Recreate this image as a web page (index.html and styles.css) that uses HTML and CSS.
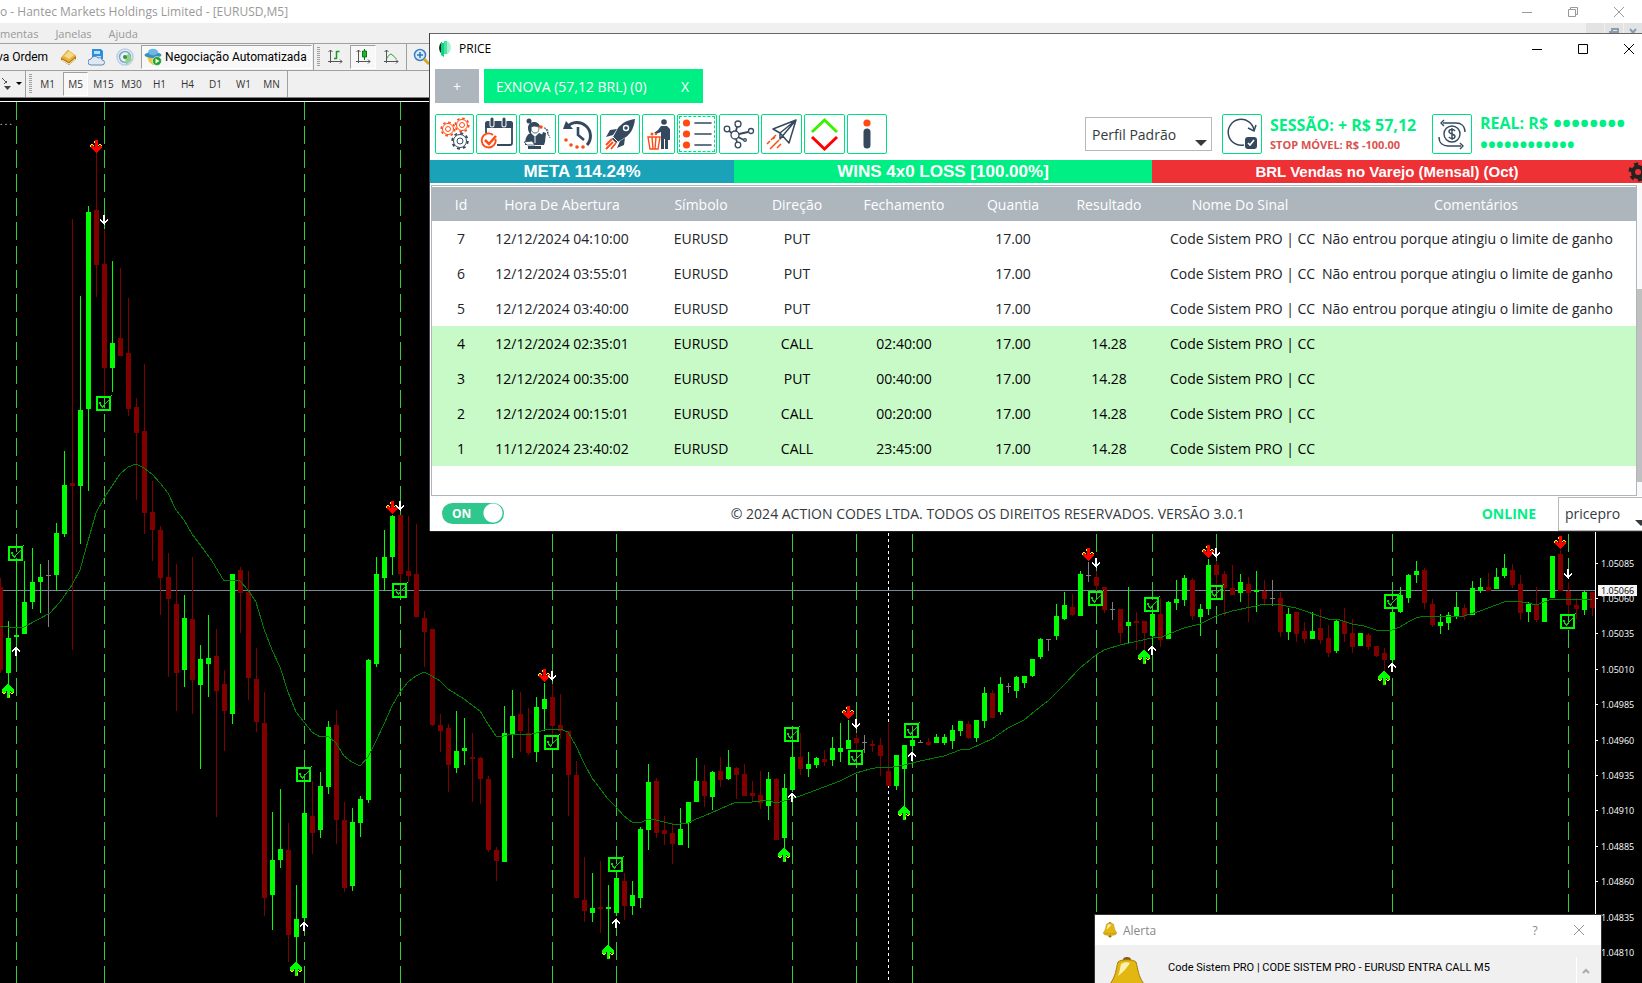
FILE: index.html
```html
<!DOCTYPE html>
<html lang="pt-BR">
<head>
  <meta charset="UTF-8">
  <meta name="viewport" content="width=device-width, initial-scale=1.0">
  <title>PRICE</title>
  <link rel="stylesheet" href="styles.css">
</head>
<body>
  <!-- Trading terminal -->
  <main class="terminal">
    <header class="terminal-title">
      <span>o - Hantec Markets Holdings Limited - [EURUSD,M5]</span>
      <div class="terminal-controls">
        <button aria-label="Minimizar"><svg width="12" height="12" viewBox="0 0 12 12"><path d="M1 6.5h10"/></svg></button>
        <button aria-label="Restaurar"><svg width="12" height="12" viewBox="0 0 12 12"><path d="M1.500 3.500h7v7h-7zM3.500 3.500v-2h7v7h-2"/></svg></button>
        <button aria-label="Fechar"><svg width="12" height="12" viewBox="0 0 12 12"><path d="M1 1l10 10M11 1L1 11"/></svg></button>
      </div>
    </header>
    <nav class="menu-bar">
      <a href="#ferramentas">mentas</a>
      <a href="#janelas">Janelas</a>
      <a href="#ajuda">Ajuda</a>
      <div class="mdi-controls">
        <button aria-label="Minimizar gráfico"></button>
        <button aria-label="Restaurar gráfico"><svg width="10" height="10" viewBox="0 0 10 10"><path d="M3 3V1h6v5H7M1 4h6v5H1z"/></svg></button>
        <button aria-label="Fechar gráfico"><svg width="10" height="10" viewBox="0 0 10 10"><path d="M2 1l6 7M8 1L2 8"/></svg></button>
      </div>
    </nav>
    <div class="toolbar">
      <button class="tool order">va Ordem</button>
      <button class="tool" aria-label="Histórico">
        <svg width="18" height="18" viewBox="0 0 18 18"><path d="M1 10l7-8 8 6v3l-7 6-8-5z" fill="#b07a1c"/><path d="M1 9.500l7-7.500 8 6-7 6z" fill="#e8b23a"/><path d="M4 8l5-5 5 4-5 4z" fill="#f8d98a"/><path d="M2 12l7 4 6-5" stroke="#fff3c8" fill="none"/></svg>
      </button>
      <button class="tool" aria-label="Nuvem">
        <svg width="18" height="18" viewBox="0 0 18 18"><path d="M4 1h9l2 2v8H4z" fill="#2b8fe0"/><path d="M6 3h6v3H6zM7 8h6v3H7z" fill="#bfe0fa"/><path d="M3 17a3 3 0 0 1 0-6 4 4 0 0 1 7-1 3 3 0 0 1 4 2 2.500 2.500 0 0 1 0 5z" fill="#dfe8f5" stroke="#6a86b0"/></svg>
      </button>
      <button class="tool" aria-label="Sinais">
        <svg width="18" height="18" viewBox="0 0 18 18" fill="none"><circle cx="9" cy="9" r="8" stroke="#b9cfe4" stroke-width="1.500"/><circle cx="9" cy="9" r="5.500" stroke="#79a6d2" stroke-width="1.500"/><path d="M9 9l1 8 6-5-3-7z" fill="#8fd08f"/><circle cx="9" cy="9" r="2" fill="#2d9a3c"/></svg>
      </button>
      <button class="tool auto pressed">
        <svg width="18" height="18" viewBox="0 0 18 18"><path d="M3 8l12 0-2 7-4 2-4-3z" fill="#f1c645"/><ellipse cx="9" cy="7" rx="8.500" ry="3" fill="#3b8fc4"/><ellipse cx="9" cy="4" rx="5" ry="3.200" fill="#6bb9e2"/><circle cx="13" cy="13" r="4.500" fill="#1fa32c" stroke="#fff" stroke-width=".6"/><path d="M11.500 10.500v5l4-2.500z" fill="#fff"/></svg>
        Negociação Automatizada
      </button>
      <span class="separator"></span>
      <span class="grip"></span>
      <button class="tool chart-kind" aria-label="Barras">
        <svg width="16" height="16" viewBox="0 0 16 16" fill="none" stroke="#555"><path d="M3.500 1v13M1 12.500h14M1.500 3l2-2 2 2M13 10.500l2 2-2 2"/><path d="M9.500 2v8M9.500 2.500h3M7 9.500h2.500" stroke="#159a1c" stroke-width="1.500"/></svg>
      </button>
      <button class="tool chart-kind pressed" aria-label="Velas">
        <svg width="16" height="16" viewBox="0 0 16 16" fill="none" stroke="#555"><path d="M3.500 1v13M1 12.500h14M1.500 3l2-2 2 2M13 10.500l2 2-2 2"/><path d="M9.500 0v11" stroke="#0b7a16"/><path d="M7.500 2h4v6h-4z" fill="#1fb52c" stroke="#0b7a16"/></svg>
      </button>
      <button class="tool chart-kind" aria-label="Linha">
        <svg width="16" height="16" viewBox="0 0 16 16" fill="none" stroke="#555"><path d="M3.500 1v13M1 12.500h14M1.500 3l2-2 2 2M13 10.500l2 2-2 2"/><path d="M3.500 10c2-4 4-6 6-4s3 3 4 4" stroke="#159a1c"/></svg>
      </button>
      <span class="separator"></span>
      <button class="tool" aria-label="Ampliar">
        <svg width="18" height="18" viewBox="0 0 18 18" fill="none"><circle cx="8" cy="7" r="5.500" fill="#d8ebfb" stroke="#3a7fc0" stroke-width="1.500"/><path d="M8 4v6M5 7h6" stroke="#2f75b8" stroke-width="1.500"/><path d="M12 11l5 5" stroke="#d9a727" stroke-width="3"/></svg>
      </button>
    </div>
    <div class="toolbar periods">
      <button class="tool shapes" aria-label="Setas">
        <svg width="22" height="16" viewBox="0 0 22 16"><path d="M0 2l5 5M2 8l3-3" stroke="#555" fill="none"/><path d="M2 10h7l-3.500 4z" fill="#444"/><path d="M14 6h6l-3 3z" fill="#000"/></svg>
      </button>
      <span class="separator"></span>
      <span class="grip"></span>
      <button class="tool period">M1</button>
      <button class="tool period pressed">M5</button>
      <button class="tool period">M15</button>
      <button class="tool period">M30</button>
      <button class="tool period">H1</button>
      <button class="tool period">H4</button>
      <button class="tool period">D1</button>
      <button class="tool period">W1</button>
      <button class="tool period">MN</button>
      <span class="separator"></span>
    </div>
    <section class="chart">
      <svg class="chart-canvas" role="img" aria-label="EURUSD M5">
        <defs>
          <symbol id="check" viewBox="0 0 16 16">
            <path d="M1 2h13v13H1z" fill="none" stroke="#00ff00" stroke-width="2"/>
            <path d="M3 7h2v2l1 2 1 0 2-3 2-2 2-2 2-2v1l-2 2-2 2-2 2-2 4H6L4 10z" fill="#00e000"/>
            <path d="M15 0h1v1h-1z" fill="#00ff00"/>
          </symbol>
          <symbol id="sell" viewBox="0 0 12 14">
            <path d="M5 0h3v7h1V6h1V5h2v3h-1v1h-1v1H9v1H8v1H7v1H6v-1H5v-1H4v-1H3V9H2V8H1V5h2v1h1v1h1z" fill="#ff0000"/>
            <path d="M4 1h1v2H4zM1 4h2v1H1zM0 5h1v2H0zM3 5h1v1H3zM9 4h2v1H9zM8 5h1v1H8zM11 5h1v1h-1z" fill="#ffff00"/>
          </symbol>
          <symbol id="buy" viewBox="0 0 12 14">
            <path d="M5 0h2v1h1v1h1v1h1v1h1v1h1v3h-1v1h-1V8H9V7H8v7H5V7H4v1H3v1H1V8H0V5h1V4h1V3h1V2h1V1h1z" fill="#00ff00"/>
            <path d="M1 9h2v1H1zM0 8h1v1H0zM3 8h1v1H3zM9 9h2v1H9zM8 8h1v1H8zM11 8h1v1h-1zM7 11h1v2H7z" fill="#ffff00"/>
          </symbol>
          <symbol id="down" viewBox="0 0 8 10">
            <path d="M3 0h2v6h1V5h1V4h1v2H7v1H6v1H5v2H4V9H3V8H2V7H1V6H0V4h1v1h1v1h1z" fill="#fff"/>
          </symbol>
          <symbol id="up" viewBox="0 0 8 10">
            <path d="M3 10h2V4h1v1h1v1h1V4H7V3H6V2H5V1H4V0v1H3v1H2v1H1v1H0v2h1V5h1V4h1z" fill="#fff"/>
          </symbol>
        </defs>
        <g id="plot" transform="translate(0 -102)"></g>
      </svg>
    </section>
  </main>

  <!-- Price window -->
  <section class="price-window">
    <header class="window-title">
      <svg width="14" height="16" viewBox="0 0 14 16"><path d="M4 1a6 7 0 0 0 0 12z" fill="#222"/><path d="M3 2h3v14l-3-2z" fill="#00d87a"/><path d="M6 0h3v13H6z" fill="#4be3a2"/><path d="M9 0a6 7 0 0 1 0 13z" fill="#a5f0d0"/></svg>
      <h1>PRICE</h1>
      <div class="window-controls">
        <button aria-label="Minimizar"><svg width="12" height="12" viewBox="0 0 12 12"><path d="M1 6.500h10"/></svg></button>
        <button aria-label="Maximizar"><svg width="12" height="12" viewBox="0 0 12 12"><path d="M1.500 1.500h9v9h-9z"/></svg></button>
        <button aria-label="Fechar"><svg width="12" height="12" viewBox="0 0 12 12"><path d="M1 1l10 10M11 1L1 11"/></svg></button>
      </div>
    </header>

    <div class="tabs">
      <button class="tab-add" aria-label="Nova conta">+</button>
      <div class="tab">
        <span>EXNOVA (57,12 BRL) (0)</span>
        <button aria-label="Fechar conta">X</button>
      </div>
    </div>

    <div class="actions">
      <div class="icon-row">
        <button class="icon-btn" aria-label="Configurações">
          <svg width="37" height="38" viewBox="0 0 37 38" fill="none">
            <g stroke="#ff4a12"><circle cx="12" cy="14" r="5.500"/><circle cx="12" cy="14" r="6.800" stroke-width="1.600" stroke-dasharray="2.600 2.740"/><circle cx="12" cy="14" r="2.500"/><circle cx="26" cy="10" r="5.500"/><circle cx="26" cy="10" r="6.800" stroke-width="1.600" stroke-dasharray="2.600 2.740"/><circle cx="26" cy="10" r="2.500"/></g>
            <g stroke="#34495e"><circle cx="24" cy="26" r="6.500"/><circle cx="24" cy="26" r="7.800" stroke-width="1.800" stroke-dasharray="3 3.120"/><circle cx="24" cy="26" r="3"/></g>
          </svg>
        </button>
        <button class="icon-btn" aria-label="Agenda">
          <svg width="39" height="38" viewBox="0 0 39 38" fill="none">
            <path d="M9 18V9a2 2 0 0 1 2-2h22a2 2 0 0 1 2 2v19a2 2 0 0 1-2 2H20" stroke="#34495e" stroke-width="1.800"/><path d="M8 13V9a3 3 0 0 1 3-3h22a3 3 0 0 1 3 3v4z" fill="#34495e"/>
            <path d="M15 4v6M27 4v6" stroke="#fff" stroke-width="5" stroke-linecap="round"/><path d="M15 4v6M27 4v6" stroke="#34495e" stroke-width="3" stroke-linecap="round"/>
            <path d="M16 20a7 7 0 1 0 2.500 4" stroke="#ff4a12" stroke-width="1.800"/><path d="M8 25l4 4 7-8" stroke="#ff4a12" stroke-width="2.500"/>
          </svg>
        </button>
        <button class="icon-btn" aria-label="Suporte">
          <svg width="35" height="38" viewBox="0 0 35 38">
            <circle cx="9" cy="6" r="2.500" fill="#34495e"/><path d="M8 13c0-4 3-6 6-6s6 2 6 5l-6-1-3 4v4c-2-1-3-3-3-6z" fill="#34495e"/><path d="M11 12l3-1 5 1c0 4-1 6-4 6s-4-3-4-6z" fill="#fff" stroke="#34495e" stroke-width=".8"/>
            <path d="M5 30c0-7 2-11 6-12l4 4 4-4c4 1 6 4 6 9l-1 3z" fill="#34495e"/><path d="M4 27l8-1 3 4H7z" fill="#fff" stroke="#34495e" stroke-width=".8"/><path d="M8 31h13v3H8z" fill="#34495e"/>
            <path d="M15 22v6" stroke="#fff"/><path d="M20 25l3-8 3 1-1 9z" fill="#34495e"/><path d="M24 13c4 0 5 4 3 7M26 14l4 9" stroke="#34495e" fill="none" stroke-dasharray="2 1"/><circle cx="21" cy="12" r="1.800" fill="#ff4a12"/>
          </svg>
        </button>
        <button class="icon-btn" aria-label="Histórico">
          <svg width="38" height="38" viewBox="0 0 38 38" fill="none">
            <path d="M8 12a13 13 0 1 1 20 18" stroke="#34495e" stroke-width="3"/><path d="M4 14l3-8 7 8z" fill="#34495e"/><path d="M19 12v8l6 5" stroke="#34495e" stroke-width="2.600"/>
            <g fill="#ff4a12"><circle cx="7" cy="25" r="1.800"/><circle cx="12" cy="30" r="1.800"/><circle cx="18" cy="32" r="1.800"/><circle cx="24" cy="32" r="1.800"/></g>
          </svg>
        </button>
        <button class="icon-btn" aria-label="Iniciar">
          <svg width="38" height="38" viewBox="0 0 38 38">
            <path d="M34 4c-8 1-13 4-17 9l-6 11 4 4 10-6c5-4 8-9 9-18z" fill="#34495e"/><circle cx="25" cy="13" r="3.200" fill="#fff"/><circle cx="25" cy="13" r="1.800" fill="#34495e"/>
            <path d="M16 14l-7 1-4 7 7-2zM24 23l-1 7-7 3 3-7z" fill="#34495e"/><path d="M12 22l5 5" stroke="#fff"/><path d="M11 24l-6 6M12 27l-7 7M15 28l-5 6" stroke="#ff4a12" stroke-width="1.800"/>
          </svg>
        </button>
        <button class="icon-btn" aria-label="Limpar">
          <svg width="31" height="38" viewBox="0 0 31 38">
            <circle cx="21" cy="7" r="2.800" fill="#34495e"/><path d="M18 11h6l3 3v11h-2v9h-3V24h-1v10h-3V17l-5 2-2-1 4-3z" fill="#34495e"/>
            <path d="M5 22h12l-2 12H7zM9 22l1 12M13 22l-1 12" fill="none" stroke="#ff4a12" stroke-width="1.400"/><circle cx="9" cy="19" r="1.500" fill="#ff4a12"/><path d="M12 18h2v2h-2z" fill="#ff4a12"/>
          </svg>
        </button>
        <button class="icon-btn selected" aria-label="Lista de operações">
          <svg width="38" height="38" viewBox="0 0 38 38">
            <g fill="#ff4a12"><circle cx="8.500" cy="8" r="3.600"/><circle cx="8.500" cy="19" r="3.600"/><circle cx="8.500" cy="30" r="3.600"/></g><path d="M17 8h16M17 19h16M17 30h16" stroke="#34495e" stroke-width="1.600" stroke-linecap="round"/>
          </svg>
        </button>
        <button class="icon-btn" aria-label="Conexões">
          <svg width="38" height="38" viewBox="0 0 38 38" fill="none" stroke="#34495e" stroke-width="1.300">
            <circle cx="15" cy="20" r="4"/><circle cx="18" cy="9" r="3"/><circle cx="7" cy="14" r="2.800"/><circle cx="31" cy="16" r="2.500"/><circle cx="18" cy="30" r="2.800"/><circle cx="25" cy="25" r="1.300"/>
            <path d="M16 16l1-4M9 16l3 2M19 19l9-2M16 24l1 3M18 22l6 3" stroke-width="1.800"/>
          </svg>
        </button>
        <button class="icon-btn" aria-label="Enviar">
          <svg width="39" height="38" viewBox="0 0 39 38" fill="none">
            <path d="M34 5L11 14l7 4zM34 5L18 18v6zM34 5l-7 23-9-10z" stroke="#34495e" stroke-width="1.500" stroke-linejoin="round"/><path d="M14 20l-5 5M8 26l-3 3M17 25l-9 9M19 29l-4 4M13 22l-2 2" stroke="#ff4a12" stroke-width="1.500"/>
          </svg>
        </button>
        <button class="icon-btn" aria-label="Compra e venda">
          <svg width="39" height="38" viewBox="0 0 39 38" fill="none" stroke-width="3"><path d="M7 17L19.500 5 32 17" stroke="#3df000"/><path d="M7 22l12.500 12L32 22" stroke="#ff0000"/></svg>
        </button>
        <button class="icon-btn" aria-label="Informações">
          <svg width="38" height="38" viewBox="0 0 38 38"><circle cx="19" cy="8" r="3.600" fill="#ff4a12"/><path d="M19 17v13" stroke="#34495e" stroke-width="7" stroke-linecap="round"/></svg>
        </button>
      </div>

      <div class="summary">
        <div class="select-box profile">
          <select aria-label="Perfil"><option>Perfil Padrão</option></select>
        </div>
        <button class="icon-btn" aria-label="Atualizar sessão">
          <svg width="38" height="38" viewBox="0 0 38 38" fill="none">
            <path d="M21 30A13 13 0 1 1 31 15" stroke="#34495e" stroke-width="1.500"/><path d="M25 13l6 3 2-6" stroke="#34495e" stroke-width="1.500"/><rect x="22" y="22" width="12" height="12" rx="3" fill="#34495e"/><path d="M25 28l2 2 4-5" stroke="#fff" stroke-width="1.600"/>
          </svg>
        </button>
        <div class="session">
          <strong>SESSÃO: + R$ 57,12</strong>
          <small>STOP MÓVEL: R$ -100.00</small>
        </div>
        <button class="icon-btn" aria-label="Mostrar saldo">
          <svg width="38" height="38" viewBox="0 0 38 38" fill="none" stroke="#34495e" stroke-width="1.400">
            <circle cx="19" cy="19" r="8"/><path d="M22 16c-1-2-6-2-6 .5 0 3 6 2 6 5 0 2.500-5 2.500-6 .5M19 13v12"/><path d="M10 8h13c5 0 9 3 9 9M11 5L8 8l3 3M28 31H15c-5 0-9-3-9-9M27 28l3 3-3 3"/>
          </svg>
        </button>
        <div class="balance">
          <p>REAL: R$ <span class="dots">••••••••</span></p>
          <p class="dots small">••••••••••••</p>
        </div>
      </div>
    </div>

    <div class="status-bar">
      <div class="meta">META 114.24%</div>
      <div class="wins">WINS 4x0 LOSS [100.00%]</div>
      <div class="news">
        <span>BRL Vendas no Varejo (Mensal) (Oct)</span>
        <button aria-label="Configurar notícias">
          <svg width="20" height="20" viewBox="0 0 20 20" fill="none" stroke="#222"><circle cx="10" cy="10" r="5" stroke-width="4"/><circle cx="10" cy="10" r="8" stroke-width="3" stroke-dasharray="4.190 4.190"/></svg>
        </button>
      </div>
    </div>

    <!-- Operations -->
    <div class="operations">
      <div class="table-box">
        <table>
          <colgroup>
            <col class="col-id"><col class="col-time"><col class="col-symbol"><col class="col-side"><col class="col-close"><col class="col-amount"><col class="col-result"><col class="col-signal"><col>
          </colgroup>
          <thead>
            <tr><th>Id</th><th>Hora De Abertura</th><th>Símbolo</th><th>Direção</th><th>Fechamento</th><th>Quantia</th><th>Resultado</th><th>Nome Do Sinal</th><th>Comentários</th></tr>
          </thead>
          <tbody>
            <tr><td>7</td><td>12/12/2024 04:10:00</td><td>EURUSD</td><td>PUT</td><td></td><td>17.00</td><td></td><td>Code Sistem PRO | CC</td><td>Não entrou porque atingiu o limite de ganho</td></tr>
            <tr><td>6</td><td>12/12/2024 03:55:01</td><td>EURUSD</td><td>PUT</td><td></td><td>17.00</td><td></td><td>Code Sistem PRO | CC</td><td>Não entrou porque atingiu o limite de ganho</td></tr>
            <tr><td>5</td><td>12/12/2024 03:40:00</td><td>EURUSD</td><td>PUT</td><td></td><td>17.00</td><td></td><td>Code Sistem PRO | CC</td><td>Não entrou porque atingiu o limite de ganho</td></tr>
            <tr class="win"><td>4</td><td>12/12/2024 02:35:01</td><td>EURUSD</td><td>CALL</td><td>02:40:00</td><td>17.00</td><td>14.28</td><td>Code Sistem PRO | CC</td><td></td></tr>
            <tr class="win"><td>3</td><td>12/12/2024 00:35:00</td><td>EURUSD</td><td>PUT</td><td>00:40:00</td><td>17.00</td><td>14.28</td><td>Code Sistem PRO | CC</td><td></td></tr>
            <tr class="win"><td>2</td><td>12/12/2024 00:15:01</td><td>EURUSD</td><td>CALL</td><td>00:20:00</td><td>17.00</td><td>14.28</td><td>Code Sistem PRO | CC</td><td></td></tr>
            <tr class="win"><td>1</td><td>11/12/2024 23:40:02</td><td>EURUSD</td><td>CALL</td><td>23:45:00</td><td>17.00</td><td>14.28</td><td>Code Sistem PRO | CC</td><td></td></tr>
          </tbody>
        </table>
      </div>
      <div class="scrollbar"><div class="thumb"></div></div>
    </div>

    <footer class="window-footer">
      <label class="toggle"><input type="checkbox" checked><span>ON</span></label>
      <p class="copyright">© 2024 ACTION CODES LTDA. TODOS OS DIREITOS RESERVADOS. VERSÃO 3.0.1</p>
      <strong class="online">ONLINE</strong>
      <div class="select-box user">
        <select aria-label="Usuário"><option>pricepro</option></select>
      </div>
    </footer>
  </section>

  <!-- Alert window -->
  <section class="alert">
    <header class="alert-title">
      <svg width="14" height="16" viewBox="0 0 36 40"><use href="#bell"/></svg>
      <h2>Alerta</h2>
      <button aria-label="Ajuda">?</button>
      <button aria-label="Fechar"><svg width="12" height="12" viewBox="0 0 12 12"><path d="M1 1l10 10M11 1L1 11"/></svg></button>
    </header>
    <div class="alert-body">
      <svg width="36" height="40" viewBox="0 0 36 40">
        <g id="bell">
          <circle cx="18" cy="36" r="3.500" fill="#9a6a00"/><path d="M14 3a4 3 0 0 1 8 0z" fill="#8a5a10"/>
          <path d="M9 5c3-3 15-3 18 0 2 7 2 14 8 22 1 4-4 7-17 7S0 31 1 27C7 19 7 12 9 5z" fill="#e2b712" stroke="#a87a08"/><path d="M12 7c3-2 7-2 9-1-3 5-7 9-12 13 2-5 2-8 3-12z" fill="#fbf0b0"/><path d="M2 27c8 4 24 4 32 0" stroke="#a87a08" fill="none"/>
        </g>
      </svg>
      <p>Code Sistem PRO | CODE SISTEM PRO - EURUSD ENTRA CALL M5</p>
      <button class="scroll-up" aria-label="Rolar para cima"><svg width="8" height="6" viewBox="0 0 8 6"><path d="M1 5l3-3 3 3"/></svg></button>
    </div>
  </section>

  <script src="chart.js"></script>
</body>
</html>
```
FILE: styles.css
```css
/* General Styles */
* {
  box-sizing: border-box;
}
body {
  margin: 0;
  height: 100vh;
  overflow: hidden;
  position: relative;
  background: #000;
  color: #212529;
  font-family: "Open Sans", "Noto Sans", sans-serif;
  font-size: 14px;
}
button, select, input {
  font: inherit;
  color: inherit;
  margin: 0;
  padding: 0;
  border: 0;
  border-radius: 0;
  background: none;
}
button {
  display: flex;
  align-items: center;
  justify-content: center;
}
svg {
  display: block;
  flex: none;
}
h1, h2, p {
  margin: 0;
  font-weight: normal;
}
/* Terminal Styles */
.terminal {
  height: 100%;
  display: flex;
  flex-direction: column;
  background: #f0f0f0;
  font-size: 12px;
  color: #000;
}
.terminal-title {
  height: 23px;
  flex: none;
  display: flex;
  align-items: center;
  justify-content: space-between;
  background: #fff;
  color: #999;
}
.terminal-controls {
  display: flex;
}
.terminal-controls button {
  width: 46px;
  height: 20px;
}
.terminal-controls path,
.alert path[d^="M1 1"] {
  fill: none;
  stroke: #999;
}
.menu-bar {
  height: 21px;
  flex: none;
  display: flex;
  align-items: center;
  gap: 17px;
  border-bottom: 1px solid #a0a0a0;
  font-size: 11px;
}
.menu-bar a {
  color: #999;
  text-decoration: none;
}
.mdi-controls {
  align-self: stretch;
  margin-left: auto;
  display: flex;
  gap: 1px;
}
.mdi-controls button {
  width: 18px;
  background: #e3e3e3;
}
.mdi-controls path {
  fill: none;
  stroke: #8a9db0;
  stroke-width: 2;
}
.toolbar {
  height: 27px;
  flex: none;
  display: flex;
  align-items: center;
  border-bottom: 1px solid #a0a0a0;
  font-family: Roboto, sans-serif;
}
.tool {
  height: 24px;
  min-width: 28px;
}
.order {
  padding: 0 7px 0 0;
  margin-left: -3px;
}
.auto {
  gap: 3px;
  padding: 0 4px 0 2px;
  margin: 0 1px 0 2px;
}
.chart-kind {
  width: 26px;
  min-width: 26px;
  margin-right: 2px;
}
.pressed {
  background: #f8f8f8;
  border: 1px solid #fff;
  border-top-color: #a0a0a0;
  border-left-color: #a0a0a0;
}
.separator {
  width: 1px;
  height: 100%;
  background: #a0a0a0;
}
.grip {
  width: 3px;
  height: 20px;
  margin: 0 2px 0 3px;
  background: repeating-linear-gradient(#a0a0a0 0 1px, #f0f0f0 1px 2px);
}
.periods {
  color: #333;
  font-family: "Open Sans", "Noto Sans", sans-serif;
  font-size: 10px;
  border-bottom: 1px solid #808080;
}
.period {
  width: 25px;
  min-width: 25px;
  margin-right: 3px;
}
.shapes {
  width: 25px;
  min-width: 25px;
}
.periods .grip {
  margin: 0 3px;
}
.chart {
  flex: 1;
  min-height: 0;
  background: #000;
  border-top: 3px solid #000;
  box-shadow: inset 0 1px #fff;
  padding-top: 1px;
}
.chart-canvas {
  width: 100%;
  height: 100%;
  shape-rendering: crispEdges;
}
.bull {
  fill: #00ff00;
}
.bear {
  fill: #800000;
}
.flat {
  fill: #808080;
}
.average {
  fill: none;
  stroke: #008000;
}
.signal-line {
  stroke: #32cd32;
  stroke-dasharray: 18 6;
}
.day-line {
  stroke: #fff;
  stroke-dasharray: 3 3;
}
.price-line {
  stroke: #778899;
}
.axis {
  stroke: #fff;
}
.axis-label {
  fill: #fff;
  font-size: 9px;
}
.price-tag {
  fill: #f5f5f5;
}
.price-text {
  fill: #000;
  font-size: 9px;
}
/* Price Window Styles */
.price-window {
  position: absolute;
  top: 33px;
  left: 430px;
  right: -10px;
  background: #fff;
  border-top: 1px solid #666;
  box-shadow: 0 1px #222, -1px 0 #444;
}
.window-title {
  height: 29px;
  display: flex;
  align-items: center;
  gap: 7px;
  padding-left: 8px;
  color: #000;
}
.window-title h1 {
  font-size: 12px;
}
.window-controls {
  margin-left: auto;
  display: flex;
}
.window-controls button {
  width: 46px;
  height: 28px;
}
.window-controls path {
  fill: none;
  stroke: #000;
}
.tabs {
  display: flex;
  gap: 5px;
  padding: 6px 5px 11px;
  color: #fff;
}
.tab-add {
  width: 44px;
  background: #adb5bd;
}
.tab {
  height: 34px;
  display: flex;
  align-items: center;
  justify-content: space-between;
  width: 219px;
  padding: 0 14px 0 12px;
  background: #00ef85;
}
.actions {
  display: flex;
  justify-content: space-between;
  padding: 0 0 6px 5px;
}
.icon-row {
  display: flex;
  gap: 2px;
}
.icon-btn {
  height: 40px;
  border: 1px solid #00e083;
  border-radius: 2px;
}
.icon-btn.selected {
  outline: 1px dashed #00e083;
  outline-offset: -3px;
}
.summary {
  display: flex;
  align-items: center;
  gap: 8px;
}
.select-box {
  position: relative;
  height: 34px;
}
.select-box select {
  appearance: none;
  width: 100%;
  height: 100%;
  padding: 0 8px 0 6px;
  border: 1px solid #b8b8b8;
  background: #fff;
  color: #343a40;
}
.select-box::after {
  content: "";
  position: absolute;
  right: 5px;
  bottom: 5px;
  border: 6px solid transparent;
  border-top-color: #343a40;
  border-bottom: 0;
}
.profile {
  width: 127px;
  margin-right: 2px;
}
.session {
  width: 154px;
  display: flex;
  flex-direction: column;
  white-space: nowrap;
}
.session strong {
  font-size: 16px;
  line-height: 22px;
  color: #00ef85;
}
.session small {
  font-size: 11px;
  line-height: 18px;
  font-weight: bold;
  color: #d9534f;
}
.balance {
  width: 172px;
  height: 40px;
  display: flex;
  flex-direction: column;
  justify-content: space-between;
  white-space: nowrap;
  font-size: 16px;
  color: #00ef85;
}
.balance p {
  height: 18px;
  line-height: 18px;
  display: flex;
  align-items: center;
  gap: 5px;
  font-weight: bold;
}
.balance .dots {
  font-size: 24px;
}
.balance .small {
  font-size: 21px;
}
.status-bar {
  display: grid;
  grid-template-columns: 304fr 418fr 500fr;
  font: bold 17px/23px "Liberation Sans", sans-serif;
  color: #fff;
  text-align: center;
}
.meta {
  background: #19a2b8;
}
.wins {
  background: #00ef85;
}
.news {
  display: flex;
  background: #ee3135;
  font-size: 15px;
}
.news span {
  flex: 1;
}
.news button {
  width: 30px;
  justify-content: flex-start;
  padding-left: 6px;
}
/* Operations Table Styles */
.operations {
  display: flex;
  padding: 2px 0 0 1px;
}
.table-box {
  flex: 1;
  min-height: 311px;
  padding: 1px 0;
  border: 1px solid #adb5bd;
}
table {
  width: 100%;
  table-layout: fixed;
  border-collapse: collapse;
}
th, td {
  height: 35px;
  padding: 0;
  text-align: center;
  white-space: nowrap;
}
th {
  height: 34px;
  background: #adb5bd;
  color: #fff;
  font-weight: normal;
}
th:first-child, td:first-child {
  padding-left: 10px;
}
td:nth-child(n+8) {
  padding-left: 6px;
  text-align: left;
}
.win {
  background: #c8fac8;
  color: #000;
}
.col-id {
  width: 48px;
}
.col-time {
  width: 164px;
}
.col-symbol {
  width: 114px;
}
.col-side {
  width: 78px;
}
.col-close {
  width: 136px;
}
.col-amount {
  width: 82px;
}
.col-result {
  width: 110px;
}
.col-signal {
  width: 152px;
}
.scrollbar {
  width: 15px;
  padding: 104px 0 14px;
  display: flex;
  background: #f8f9fa;
}
.thumb {
  flex: 1;
  background: #c0c0c0;
}
.window-footer {
  height: 35px;
  display: flex;
  align-items: center;
  padding-left: 12px;
  gap: 22px;
}
.toggle {
  display: grid;
  align-items: center;
  width: 62px;
  height: 21px;
  color: #fff;
  font-size: 12px;
  font-weight: bold;
}
.toggle input, .toggle span {
  grid-area: 1 / 1;
}
.toggle span {
  padding-left: 10px;
}
.toggle input {
  appearance: none;
  width: 62px;
  height: 21px;
  border-radius: 11px;
  background: radial-gradient(circle at 51px 10px, #fff 9px, #2fc78d 10px);
}
.copyright {
  flex: 1;
  padding-right: 10px;
  text-align: center;
  color: #343a40;
}
.online {
  color: #00ef85;
}
.user {
  width: 94px;
}
/* Alert Styles */
.alert {
  position: absolute;
  left: 1094px;
  bottom: 0;
  width: 508px;
  height: 69px;
  overflow: hidden;
  background: #f0f0f0;
  border: 1px solid #333;
  border-bottom: 0;
}
.alert-title {
  height: 30px;
  display: flex;
  align-items: center;
  gap: 6px;
  padding-left: 8px;
  background: #fff;
  color: #888;
  font-size: 12px;
}
.alert-title h2 {
  flex: 1;
  font-size: 12px;
}
.alert-title button {
  width: 38px;
}
.alert-title button:last-child {
  margin-right: 3px;
}
.alert-body {
  display: flex;
  align-items: flex-start;
  padding: 12px 0 0 14px;
  gap: 23px;
  color: #000;
  font-family: Roboto, sans-serif;
  font-size: 11px;
  line-height: 22px;
}
.alert-body p {
  flex: 1;
}
.scroll-up {
  width: 25px;
  height: 28px;
  padding-right: 6px;
  border-left: 1px solid #fff;
}
.scroll-up path {
  fill: none;
  stroke: #aaa;
  stroke-width: 2;
}
```
FILE: chart.js
```js
const STEP = 8;

// one candle per entry: colour, high, body top, body bottom, low
const candles = `
r578,587,670,673 g621,638,673,687 g561,635,637,647 g561,602,634,634 g548,582,602,609 g564,577,582,613 d560,575,576,627 g523,533,575,591
g451,485,534,537 r219,483,486,650 g296,410,486,544 g206,212,409,491 r153,210,265,297 r229,264,368,396 g261,343,368,392 r268,338,356,356
r298,353,409,416 r398,407,433,500 r364,431,513,534 r481,512,530,561 r526,530,578,615 r553,577,599,677 r564,604,673,711 g595,618,670,687
r557,619,680,714 g645,659,685,769 g615,658,664,697 r629,656,691,817 r670,684,711,751 g574,574,714,724 r567,570,593,633 r571,592,678,700
r648,679,722,732 r692,723,898,916 g812,860,895,930 g789,849,860,868 r823,850,935,962 g885,919,937,963 g782,813,918,921 r781,816,833,854
g772,786,830,838 g721,727,787,794 r710,725,820,844 r802,820,888,892 g808,822,886,891 g796,799,823,837 g659,660,800,803 g557,574,664,667
g530,557,578,591 g515,516,557,575 r515,515,574,583 r516,571,576,582 r524,574,617,617 r611,618,632,667 r629,629,725,726 r714,725,731,752
r724,728,765,792 g711,751,768,773 g718,748,751,765 r733,757,759,802 r757,758,779,804 r776,779,850,852 r847,850,861,881 g706,733,862,862
g690,716,734,758 r692,714,731,752 r708,733,753,755 g697,707,752,762 g683,699,709,731 r684,697,726,735 r694,725,731,739 r731,731,775,816
r761,775,898,898 r857,900,911,922 g873,908,913,922 r861,907,909,933 g885,907,909,947 g872,878,913,916 r873,881,906,920 g881,895,906,915
g827,829,898,908 g764,782,830,850 r778,781,833,838 r816,830,834,845 r823,833,844,864 g808,829,845,845 g802,802,823,848 g758,781,802,802
r765,781,796,807 g771,772,797,810 r757,771,780,787 g750,767,779,780 r767,768,775,799 r764,774,796,796 r781,793,796,801 r771,795,803,809
g772,779,806,820 r778,779,840,840 g774,788,838,849 g742,757,790,790 r733,757,769,775 g752,764,769,777 g757,758,765,768 r750,759,762,766
g737,748,760,766 g723,748,752,762 g720,740,749,749 r733,738,743,750 d735,742,743,753 r740,744,746,752 r738,745,756,776 r723,771,786,786
g755,755,786,790 g745,745,769,806 g738,740,746,750 d740,742,743,743 r738,742,745,746 g734,737,743,743 g734,737,743,745 g725,730,741,749
g721,721,731,736 r721,724,738,739 g720,720,738,742 g687,693,721,728 r690,693,718,718 g677,684,712,715 d683,686,687,693 g676,677,691,698
g676,676,683,688 g659,659,676,677 g638,639,657,659 d639,639,640,651 g604,616,636,640 g592,605,619,620 r594,607,615,616 g571,574,616,616
d562,575,576,582 r571,577,586,591 r587,587,610,613 d602,609,610,620 r609,609,633,643 g587,622,626,644 r612,621,623,650 r621,621,633,651
g612,614,636,645 r598,614,640,647 g601,602,639,639 g580,599,603,610 g575,578,600,606 r578,580,616,620 g604,609,617,636 g559,565,609,615
r561,565,575,585 r571,574,588,616 r565,588,595,595 g574,582,593,602 r577,584,593,622 g571,590,592,612 r580,591,599,606 d580,598,599,606
r592,598,632,637 g608,614,632,640 r612,612,634,642 r622,631,639,643 g612,631,639,639 r609,628,640,644 r625,638,653,657 g620,621,651,653
r608,621,634,642 r619,633,647,653 g633,633,646,646 r633,635,647,650 r646,646,656,657 r648,653,660,671 g609,612,660,664 g587,595,612,613
g574,575,598,603 g561,571,575,583 r568,570,603,609 r599,604,625,627 g614,622,626,634 g612,615,623,630 g592,607,616,619 r604,608,616,620
g581,588,615,615 g578,587,591,593 r573,587,591,591 g568,577,589,589 g554,568,576,578 r564,570,585,588 r575,584,613,620 g602,604,612,622
r587,605,620,622 g598,598,622,622 g556,556,598,598 r550,554,591,591 r582,591,605,614 r598,605,609,619 g591,592,610,615 r592,592,608,616
`.trim().split(/\s+/);

const average = "0,626 16,628 24,627 50,613 60,602 72,585 80,570 86,548 96,513 104,498 120,474 128,467 136,464 144,468 152,474 160,483 168,493 176,510 184,520 192,534 204,550 212,561 224,581 232,580 240,581 248,590 256,602 264,629 272,650 280,667 288,692 296,712 304,722 312,732 320,737 328,736 336,743 344,756 352,762 360,766 368,757 376,741 384,724 392,706 400,692 408,682 416,676 424,672 432,676 440,681 448,689 464,699 480,711 488,724 496,736 504,736 512,734 528,735 536,733 544,730 552,729 560,729 568,732 576,746 584,763 592,778 608,799 616,807 624,816 632,822 640,823 648,819 656,820 672,824 680,824 688,823 696,819 704,816 720,809 736,802 752,802 768,800 776,803 784,801 800,796 816,790 840,781 856,773 870,769 880,767 888,768 904,765 920,761 944,756 960,750 970,749 992,739 1008,728 1024,720 1040,707 1048,701 1064,685 1080,668 1096,655 1104,650 1120,645 1152,638 1162,637 1176,631 1184,628 1200,624 1208,620 1216,616 1232,611 1256,606 1264,604 1276,604 1296,608 1328,619 1340,620 1352,624 1364,626 1376,630 1384,631 1392,630 1400,627 1408,622 1416,618 1424,616 1448,617 1464,616 1480,611 1496,605 1504,602 1516,601 1528,603 1536,605 1544,602 1552,599 1592,599";

// x of the candle, y of the top of the mark
const marks = {
  check: [[16, 546], [104, 396], [304, 767], [400, 583], [552, 735], [616, 857], [792, 727], [856, 750], [912, 723], [1096, 591], [1152, 597], [1216, 585], [1392, 594], [1568, 614]],
  sell: [[96, 140], [392, 501], [544, 669], [848, 706], [1088, 548], [1208, 545], [1560, 536]],
  buy: [[8, 684], [296, 962], [608, 945], [784, 848], [904, 806], [1144, 650], [1384, 671]],
  down: [[104, 215], [400, 501], [552, 671], [856, 719], [1096, 558], [1216, 548], [1568, 569]],
  up: [[16, 646], [304, 921], [616, 918], [792, 792], [912, 751], [1152, 645], [1392, 662]]
};
const markSize = { check: [16, 16], sell: [12, 14], buy: [12, 14], down: [8, 10], up: [8, 10] };

const prices = [["1.05085", 563], ["1.05060", 598], ["1.05035", 633], ["1.05010", 669], ["1.04985", 704], ["1.04960", 740], ["1.04935", 775], ["1.04910", 810], ["1.04885", 846], ["1.04860", 881], ["1.04835", 917], ["1.04810", 952]];

const colours = { g: "bull", r: "bear", d: "flat" };
let out = "";

function line(name, x1, y1, x2, y2) {
  out += `<line class="${name}" x1="${x1}" y1="${y1}" x2="${x2}" y2="${y2}"/>`;
}

line("price-line", 0, 590.5, 1595, 590.5);
marks.check.forEach(([x]) => line("signal-line", x + 0.5, 102, x + 0.5, 1200));
line("day-line", 888.5, 533, 888.5, 1200);

candles.forEach((entry, i) => {
  const [high, top, bottom, low] = entry.slice(1).split(",").map(Number);
  const x = i * STEP;
  const name = colours[entry[0]];
  out += `<rect class="${name}" x="${x}" y="${high}" width="1" height="${low - high}"/>`;
  out += `<rect class="${name}" x="${x - 2}" y="${top}" width="5" height="${bottom - top}"/>`;
});

out += `<polyline class="average" points="${average}"/>`;

Object.keys(marks).forEach(kind => {
  const [w, h] = markSize[kind];
  const lift = kind === "check" ? 1 : 0;
  marks[kind].forEach(([x, y]) => {
    out += `<use href="#${kind}" x="${x - w / 2}" y="${y - lift}" width="${w}" height="${h}"/>`;
  });
});

line("axis", 1595.5, 102, 1595.5, 1200);
prices.forEach(([label, y]) => {
  line("axis", 1596, y + 0.5, 1598, y + 0.5);
  out += `<text class="axis-label" x="1601" y="${y + 4}">${label}</text>`;
});
out += `<rect class="price-tag" x="1598" y="585" width="39" height="11"/>`;
out += `<text class="price-text" x="1601" y="594">1.05066</text>`;
out += `<text class="axis-label" x="0" y="125">. . .</text>`;

document.getElementById("plot").innerHTML = out;
```
